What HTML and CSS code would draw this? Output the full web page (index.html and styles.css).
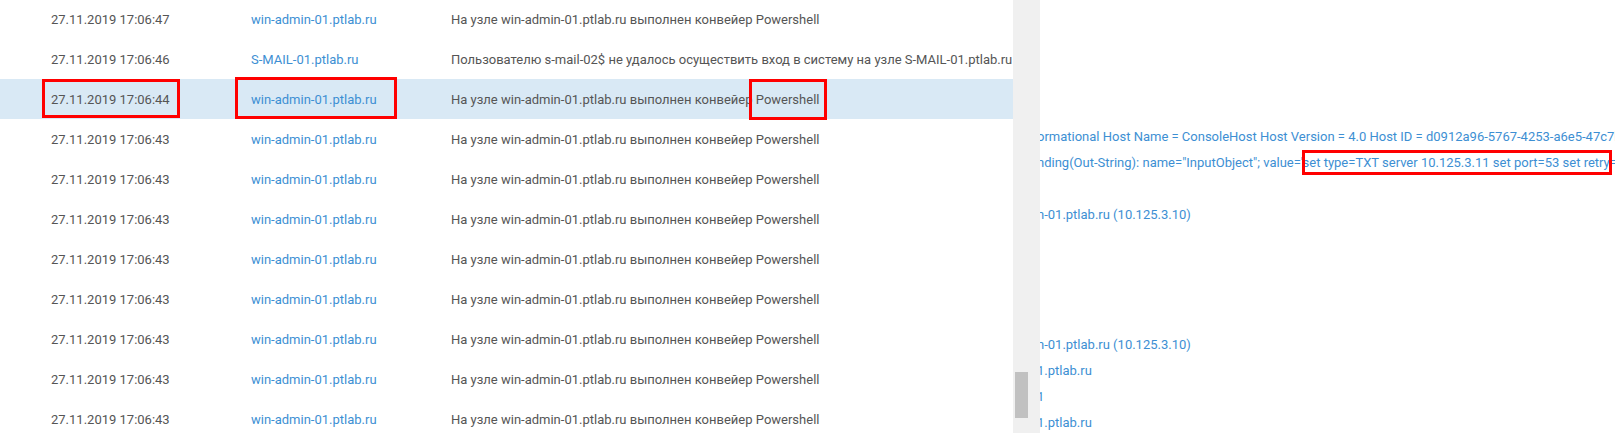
FILE: index.html
```html
<!DOCTYPE html>
<html lang="ru">
<head>
<meta charset="utf-8">
<title>События</title>
<link rel="stylesheet" href="styles.css">
</head>
<body>
<div class="app">
  <section class="events">
    <div class="events-list">
      <div class="row"><span class="col-time">27.11.2019 17:06:47</span><a class="col-host">win-admin-01.ptlab.ru</a><span class="col-msg">На узле win-admin-01.ptlab.ru выполнен конвейер Powershell</span></div>
      <div class="row"><span class="col-time">27.11.2019 17:06:46</span><a class="col-host">S-MAIL-01.ptlab.ru</a><span class="col-msg">Пользователю s-mail-02$ не удалось осуществить вход в систему на узле S-MAIL-01.ptlab.ru</span></div>
      <div class="row selected"><span class="col-time">27.11.2019 17:06:44</span><a class="col-host">win-admin-01.ptlab.ru</a><span class="col-msg">На узле win-admin-01.ptlab.ru выполнен конвейер Powershell</span></div>
      <div class="row"><span class="col-time">27.11.2019 17:06:43</span><a class="col-host">win-admin-01.ptlab.ru</a><span class="col-msg">На узле win-admin-01.ptlab.ru выполнен конвейер Powershell</span></div>
      <div class="row"><span class="col-time">27.11.2019 17:06:43</span><a class="col-host">win-admin-01.ptlab.ru</a><span class="col-msg">На узле win-admin-01.ptlab.ru выполнен конвейер Powershell</span></div>
      <div class="row"><span class="col-time">27.11.2019 17:06:43</span><a class="col-host">win-admin-01.ptlab.ru</a><span class="col-msg">На узле win-admin-01.ptlab.ru выполнен конвейер Powershell</span></div>
      <div class="row"><span class="col-time">27.11.2019 17:06:43</span><a class="col-host">win-admin-01.ptlab.ru</a><span class="col-msg">На узле win-admin-01.ptlab.ru выполнен конвейер Powershell</span></div>
      <div class="row"><span class="col-time">27.11.2019 17:06:43</span><a class="col-host">win-admin-01.ptlab.ru</a><span class="col-msg">На узле win-admin-01.ptlab.ru выполнен конвейер Powershell</span></div>
      <div class="row"><span class="col-time">27.11.2019 17:06:43</span><a class="col-host">win-admin-01.ptlab.ru</a><span class="col-msg">На узле win-admin-01.ptlab.ru выполнен конвейер Powershell</span></div>
      <div class="row"><span class="col-time">27.11.2019 17:06:43</span><a class="col-host">win-admin-01.ptlab.ru</a><span class="col-msg">На узле win-admin-01.ptlab.ru выполнен конвейер Powershell</span></div>
      <div class="row"><span class="col-time">27.11.2019 17:06:43</span><a class="col-host">win-admin-01.ptlab.ru</a><span class="col-msg">На узле win-admin-01.ptlab.ru выполнен конвейер Powershell</span></div>
    </div>
  </section>
  <div class="scrollbar"><div class="thumb"></div></div>
  <section class="details">
    <div class="line"></div>
    <div class="line"></div>
    <div class="line"></div>
    <div class="line"></div>
    <div class="line">ormational Host Name = ConsoleHost Host Version = 4.0 Host ID = d0912a96-5767-4253-a6e5-47c7b1e2f3a4 Host Application</div>
    <div class="line">nding(Out-String): name="InputObject"; value='set type=TXT server 10.125.3.11 set port=53 set retry=1 set timeout=1'</div>
    <div class="line"></div>
    <div class="line">n-01.ptlab.ru (10.125.3.10)</div>
    <div class="line"></div>
    <div class="line"></div>
    <div class="line"></div>
    <div class="line"></div>
    <div class="line">n-01.ptlab.ru (10.125.3.10)</div>
    <div class="line">1.ptlab.ru</div>
    <div class="line">1</div>
    <div class="line">1.ptlab.ru</div>
  </section>
</div>
<div class="mark mark-time"></div>
<div class="mark mark-host"></div>
<div class="mark mark-ps"></div>
<div class="mark mark-value"></div>
</body>
</html>
```

FILE: styles.css
```css
html, body {
  margin: 0;
  padding: 0;
}
body {
  width: 1615px;
  height: 433px;
  overflow: hidden;
  background: #fff;
  font-family: Roboto, "Noto Sans", "Liberation Sans", sans-serif;
  font-size: 13px;
  color: #555;
  position: relative;
}
.app {
  display: flex;
  height: 433px;
}
.events {
  width: 1013px;
  flex: none;
  overflow: hidden;
}
.events-list {
  margin-top: -1px;
  display: flex;
  flex-direction: column;
}
.row {
  display: flex;
  align-items: center;
  height: 40px;
  flex: none;
  padding-left: 51px;
  white-space: nowrap;
}
.row.selected {
  background: #d9e9f5;
}
.col-time {
  width: 200px;
  flex: none;
  color: #555;
}
.col-host {
  width: 200px;
  flex: none;
  color: #3d8fd3;
  text-decoration: none;
}
.col-msg {
  color: #555;
}
.scrollbar {
  width: 27px;
  flex: none;
  background: #f0f0f0;
  padding: 372px 0 0 2px;
  box-sizing: border-box;
}
.thumb {
  width: 13px;
  height: 46px;
  background: #c1c1c1;
}
.details {
  flex: 1;
  min-width: 0;
  overflow: hidden;
  padding-top: 20px;
  display: flex;
  flex-direction: column;
}
.line {
  height: 26px;
  line-height: 26px;
  flex: none;
  white-space: nowrap;
  color: #3d8fd3;
  text-indent: -3px;
}
.mark {
  position: absolute;
  border: 3px solid #f00;
  box-sizing: border-box;
}
.mark-time { left: 42px; top: 79px; width: 138px; height: 39px; }
.mark-host { left: 235px; top: 77px; width: 162px; height: 42px; }
.mark-ps { left: 749px; top: 79px; width: 78px; height: 41px; }
.mark-value { left: 1302px; top: 150px; width: 310px; height: 25px; }
```
